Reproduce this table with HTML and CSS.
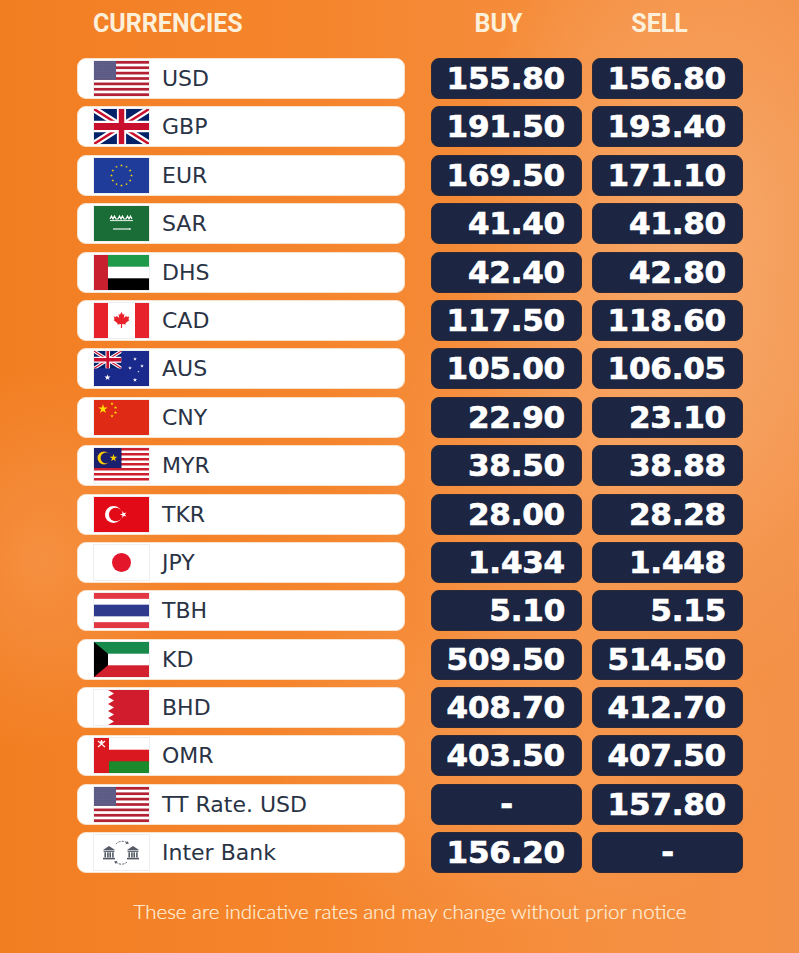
FILE: index.html
```html
<!DOCTYPE html>
<html lang="en">
<head>
<meta charset="utf-8">
<title>Currency Rates</title>
<link rel="stylesheet" href="styles.css">
</head>
<body>
<svg class="defs" width="0" height="0" aria-hidden="true">
  <defs>
    <polygon id="star" points="0,-1 0.2245,-0.309 0.951,-0.309 0.3633,0.118 0.588,0.809 0,0.382 -0.588,0.809 -0.3633,0.118 -0.951,-0.309 -0.2245,-0.309"/>
    <pattern id="usstars" width="8.25" height="7" patternUnits="userSpaceOnUse">
      <circle cx="4.1" cy="3.5" r="1.9" fill="#fff"/>
    </pattern>
    <g id="ukjack">
      <rect width="60" height="30" fill="#012169"/>
      <path d="M0,0 L60,30 M60,0 L0,30" stroke="#fff" stroke-width="6"/>
      <path d="M0,0 L60,30 M60,0 L0,30" stroke="#C8102E" stroke-width="2.2"/>
      <path d="M30,0 V30 M0,15 H60" stroke="#fff" stroke-width="10"/>
      <path d="M30,0 V30 M0,15 H60" stroke="#C8102E" stroke-width="6"/>
    </g>
    <g id="usflag">
      <rect width="247" height="130" fill="#fff"/>
      <g fill="#b22234">
        <rect y="0" width="247" height="10"/><rect y="20" width="247" height="10"/><rect y="40" width="247" height="10"/><rect y="60" width="247" height="10"/><rect y="80" width="247" height="10"/><rect y="100" width="247" height="10"/><rect y="120" width="247" height="10"/>
      </g>
      <rect width="99" height="70" fill="#3c3b6e"/>
      <rect width="99" height="70" fill="url(#usstars)"/>
    </g>
    <g id="bank" fill="#555b66">
      <polygon points="0,4 6,0 12,4"/>
      <rect x="0.5" y="4.6" width="11" height="1.3"/>
      <rect x="1.4" y="6.3" width="1.6" height="5.2"/>
      <rect x="4.1" y="6.3" width="1.6" height="5.2"/>
      <rect x="6.4" y="6.3" width="1.6" height="5.2"/>
      <rect x="9.1" y="6.3" width="1.6" height="5.2"/>
      <rect x="0" y="11.8" width="12" height="1.6"/>
    </g>
  </defs>
</svg>

<div class="page">
  <div class="head">
    <div class="h-name">CURRENCIES</div>
    <div class="h-col">BUY</div>
    <div class="h-col">SELL</div>
  </div>

  <div class="rows">
    <div class="row">
      <div class="name"><span class="flag"><svg viewBox="0 0 247 130" preserveAspectRatio="none"><use href="#usflag"/></svg></span><span class="code">USD</span></div>
      <div class="rate">155.80</div><div class="rate">156.80</div>
    </div>
    <div class="row">
      <div class="name"><span class="flag"><svg viewBox="0 0 60 30" preserveAspectRatio="none"><use href="#ukjack"/></svg></span><span class="code">GBP</span></div>
      <div class="rate">191.50</div><div class="rate">193.40</div>
    </div>
    <div class="row">
      <div class="name"><span class="flag"><svg viewBox="0 0 55 35" preserveAspectRatio="none">
        <rect width="55" height="35" fill="#1f3c9a"/>
        <g fill="#ffdd00">
          <use href="#star" transform="translate(37.5,17.5) scale(1.4)"/><use href="#star" transform="translate(36.16,22.5) scale(1.4)"/><use href="#star" transform="translate(32.5,26.16) scale(1.4)"/><use href="#star" transform="translate(27.5,27.5) scale(1.4)"/><use href="#star" transform="translate(22.5,26.16) scale(1.4)"/><use href="#star" transform="translate(18.84,22.5) scale(1.4)"/><use href="#star" transform="translate(17.5,17.5) scale(1.4)"/><use href="#star" transform="translate(18.84,12.5) scale(1.4)"/><use href="#star" transform="translate(22.5,8.84) scale(1.4)"/><use href="#star" transform="translate(27.5,7.5) scale(1.4)"/><use href="#star" transform="translate(32.5,8.84) scale(1.4)"/><use href="#star" transform="translate(36.16,12.5) scale(1.4)"/>
        </g></svg></span><span class="code">EUR</span></div>
      <div class="rate">169.50</div><div class="rate">171.10</div>
    </div>
    <div class="row">
      <div class="name"><span class="flag"><svg viewBox="0 0 55 35" preserveAspectRatio="none">
        <rect width="55" height="35" fill="#1a6d37"/>
        <path d="M16,13 l1.5,-3 l1.5,3 l1.5,-3 l1.5,3 h2 l1.5,-3 l1.5,3 l1.5,-3 l1.5,3 h2 l1.5,-3 l1.5,3 l1.5,-3 l1.5,3" stroke="#fff" stroke-width="1.2" fill="none"/>
        <path d="M16,14.6 H39" stroke="#fff" stroke-width="0.9"/>
        <path d="M19,23 H36" stroke="#fff" stroke-width="1.1"/>
        <path d="M36,22 v2" stroke="#fff" stroke-width="1"/>
      </svg></span><span class="code">SAR</span></div>
      <div class="rate">41.40</div><div class="rate">41.80</div>
    </div>
    <div class="row">
      <div class="name"><span class="flag"><svg viewBox="0 0 55 35" preserveAspectRatio="none">
        <rect width="55" height="35" fill="#fff"/>
        <rect x="14" width="41" height="11.7" fill="#1e9a4a"/>
        <rect x="14" y="23.3" width="41" height="11.7" fill="#000"/>
        <rect width="14" height="35" fill="#c8202f"/>
      </svg></span><span class="code">DHS</span></div>
      <div class="rate">42.40</div><div class="rate">42.80</div>
    </div>
    <div class="row">
      <div class="name"><span class="flag"><svg viewBox="0 0 55 35" preserveAspectRatio="none">
        <rect width="55" height="35" fill="#fff"/>
        <rect width="14" height="35" fill="#e8222a"/>
        <rect x="41" width="14" height="35" fill="#e8222a"/>
        <path transform="translate(27.5,17) scale(1.15)" fill="#e8222a" d="M0,-7 L1.3,-4.6 L2.6,-5.2 L2,-1.8 L4.2,-3.8 L4.6,-2.6 L6.8,-3 L6,-0.6 L7,0 L3.4,2.8 L3.8,4 L0.5,3.5 L0.5,7 L-0.5,7 L-0.5,3.5 L-3.8,4 L-3.4,2.8 L-7,0 L-6,-0.6 L-6.8,-3 L-4.6,-2.6 L-4.2,-3.8 L-2,-1.8 L-2.6,-5.2 L-1.3,-4.6 Z"/>
      </svg></span><span class="code">CAD</span></div>
      <div class="rate">117.50</div><div class="rate">118.60</div>
    </div>
    <div class="row">
      <div class="name"><span class="flag"><svg viewBox="0 0 55 35" preserveAspectRatio="none">
        <rect width="55" height="35" fill="#1a2a8c"/>
        <svg x="0" y="0" width="27.5" height="17.5" viewBox="0 0 60 30" preserveAspectRatio="none"><use href="#ukjack"/></svg>
        <g fill="#fff">
          <use href="#star" transform="translate(13.5,26.5) scale(3.2)"/>
          <use href="#star" transform="translate(41,8) scale(2)"/>
          <use href="#star" transform="translate(48,15) scale(2)"/>
          <use href="#star" transform="translate(36,17) scale(2)"/>
          <use href="#star" transform="translate(41,29) scale(2.2)"/>
          <use href="#star" transform="translate(44.5,20.5) scale(1.1)"/>
        </g>
      </svg></span><span class="code">AUS</span></div>
      <div class="rate">105.00</div><div class="rate">106.05</div>
    </div>
    <div class="row">
      <div class="name"><span class="flag"><svg viewBox="0 0 55 35" preserveAspectRatio="none">
        <rect width="55" height="35" fill="#df2a15"/>
        <g fill="#ffde00">
          <use href="#star" transform="translate(9,9) scale(5)"/>
          <use href="#star" transform="translate(18,3.8) scale(1.8)"/>
          <use href="#star" transform="translate(21.5,7.5) scale(1.8)"/>
          <use href="#star" transform="translate(21.5,12.5) scale(1.8)"/>
          <use href="#star" transform="translate(18,16) scale(1.8)"/>
        </g>
      </svg></span><span class="code">CNY</span></div>
      <div class="rate">22.90</div><div class="rate">23.10</div>
    </div>
    <div class="row">
      <div class="name"><span class="flag"><svg viewBox="0 0 55 35" preserveAspectRatio="none">
        <rect width="55" height="35" fill="#fff"/>
        <g fill="#cc1f2f">
          <rect y="0" width="55" height="2.5"/><rect y="5" width="55" height="2.5"/><rect y="10" width="55" height="2.5"/><rect y="15" width="55" height="2.5"/><rect y="20" width="55" height="2.5"/><rect y="25" width="55" height="2.5"/><rect y="30" width="55" height="2.5"/>
        </g>
        <rect width="27.5" height="20" fill="#1a1f6e"/>
        <circle cx="10" cy="10" r="6.5" fill="#ffcc00"/>
        <circle cx="12" cy="10" r="5.4" fill="#1a1f6e"/>
        <use href="#star" fill="#ffcc00" transform="translate(19.5,10) scale(4)"/>
      </svg></span><span class="code">MYR</span></div>
      <div class="rate">38.50</div><div class="rate">38.88</div>
    </div>
    <div class="row">
      <div class="name"><span class="flag"><svg viewBox="0 0 55 35" preserveAspectRatio="none">
        <rect width="55" height="35" fill="#e30a17"/>
        <circle cx="19.5" cy="17.5" r="8.5" fill="#fff"/>
        <circle cx="21.7" cy="17.5" r="6.8" fill="#e30a17"/>
        <use href="#star" fill="#fff" transform="translate(29.5,17.5) rotate(-18) scale(3.6)"/>
      </svg></span><span class="code">TKR</span></div>
      <div class="rate">28.00</div><div class="rate">28.28</div>
    </div>
    <div class="row">
      <div class="name"><span class="flag"><svg viewBox="0 0 55 35" preserveAspectRatio="none">
        <rect width="55" height="35" fill="#fff"/>
        <circle cx="27.5" cy="17.5" r="9.5" fill="#e3162b"/>
      </svg></span><span class="code">JPY</span></div>
      <div class="rate">1.434</div><div class="rate">1.448</div>
    </div>
    <div class="row">
      <div class="name"><span class="flag"><svg viewBox="0 0 55 36" preserveAspectRatio="none">
        <rect width="55" height="36" fill="#fff"/>
        <rect width="55" height="6" fill="#e23844"/>
        <rect y="12" width="55" height="12" fill="#2e3a8c"/>
        <rect y="30" width="55" height="6" fill="#e23844"/>
      </svg></span><span class="code">TBH</span></div>
      <div class="rate">5.10</div><div class="rate">5.15</div>
    </div>
    <div class="row">
      <div class="name"><span class="flag"><svg viewBox="0 0 55 35" preserveAspectRatio="none">
        <rect width="55" height="35" fill="#fff"/>
        <rect width="55" height="11.7" fill="#17894a"/>
        <rect y="23.3" width="55" height="11.7" fill="#d2202f"/>
        <polygon points="0,0 14,11.7 14,23.3 0,35" fill="#000"/>
      </svg></span><span class="code">KD</span></div>
      <div class="rate">509.50</div><div class="rate">514.50</div>
    </div>
    <div class="row">
      <div class="name"><span class="flag"><svg viewBox="0 0 55 35" preserveAspectRatio="none">
        <rect width="55" height="35" fill="#fff"/>
        <path d="M55,0 H14 L20,3.5 L14,7 L20,10.5 L14,14 L20,17.5 L14,21 L20,24.5 L14,28 L20,31.5 L14,35 H55 Z" fill="#d01c2c"/>
      </svg></span><span class="code">BHD</span></div>
      <div class="rate">408.70</div><div class="rate">412.70</div>
    </div>
    <div class="row">
      <div class="name"><span class="flag"><svg viewBox="0 0 55 35" preserveAspectRatio="none">
        <rect width="55" height="35" fill="#d9191f"/>
        <rect x="15" width="40" height="11.7" fill="#fff"/>
        <rect x="15" y="23.3" width="40" height="11.7" fill="#1a8a2c"/>
        <path d="M4,3 L11,9 M11,3 L4,9 M7.5,2 V7" stroke="#fff" stroke-width="1.1"/>
        <circle cx="7.5" cy="4" r="1.3" fill="#fff"/>
      </svg></span><span class="code">OMR</span></div>
      <div class="rate">403.50</div><div class="rate">407.50</div>
    </div>
    <div class="row">
      <div class="name"><span class="flag"><svg viewBox="0 0 247 130" preserveAspectRatio="none"><use href="#usflag"/></svg></span><span class="code">TT Rate. USD</span></div>
      <div class="rate dash">-</div><div class="rate">157.80</div>
    </div>
    <div class="row">
      <div class="name"><span class="flag"><svg viewBox="0 0 55 35">
        <use href="#bank" transform="translate(9,11)"/>
        <use href="#bank" transform="translate(33,11)"/>
        <path d="M22,9 A8,8 0 0 1 33,8" stroke="#555b66" stroke-width="1" fill="none" stroke-dasharray="2 1.2"/>
        <path d="M33,27 A8,8 0 0 1 22,27" stroke="#555b66" stroke-width="1" fill="none" stroke-dasharray="2 1.2"/>
        <polygon points="33,6 35,8.6 31.6,9.2" fill="#555b66"/>
        <polygon points="22,29 20,26.4 23.4,25.8" fill="#555b66"/>
      </svg></span><span class="code">Inter Bank</span></div>
      <div class="rate">156.20</div><div class="rate dash">-</div>
    </div>
  </div>

  <p class="note">These are indicative rates and may change without prior notice</p>
</div>
</body>
</html>
```

FILE: styles.css
```css
* {
  box-sizing: border-box;
}

html,
body {
  margin: 0;
  padding: 0;
}

body {
  width: 799px;
  height: 953px;
  overflow: hidden;
  font-family: "DejaVu Sans", sans-serif;
  background:
    radial-gradient(ellipse 230px 330px at 690px 230px, rgba(250, 190, 140, 0.55), rgba(250, 190, 140, 0) 100%),
    radial-gradient(ellipse 260px 240px at 620px 470px, rgba(250, 185, 135, 0.35), rgba(250, 185, 135, 0) 100%),
    radial-gradient(ellipse 150px 190px at 40px 560px, rgba(250, 175, 120, 0.35), rgba(250, 175, 120, 0) 100%),
    radial-gradient(ellipse 260px 200px at 520px 740px, rgba(250, 185, 135, 0.25), rgba(250, 185, 135, 0) 100%),
    linear-gradient(90deg, #f27e22 0%, #f5852d 40%, #f58f40 75%, #f39148 100%);
}

.defs {
  position: absolute;
  width: 0;
  height: 0;
  overflow: hidden;
}

.page {
  padding: 9px 0 0 77px;
}

.head {
  display: flex;
  gap: 10px;
  height: 30px;
  margin-bottom: 19px;
  font-family: Roboto, "Liberation Sans", sans-serif;
  font-weight: 700;
  font-size: 25px;
  line-height: 30px;
  color: #fdf0da;
}

.h-name {
  width: 328px;
  margin-right: 16px;
  padding-left: 16px;
}

.h-col {
  width: 151px;
  text-align: center;
  padding-right: 16px;
}

.rows {
  display: flex;
  flex-direction: column;
  gap: 7.4px;
}

.row {
  display: flex;
  gap: 10px;
  height: 41px;
}

.name {
  width: 328px;
  margin-right: 16px;
  display: flex;
  align-items: center;
  padding-left: 16px;
  background: #fff;
  border: 1.5px solid #f8e2cc;
  border-radius: 9px;
}

.flag {
  flex: none;
  display: block;
  width: 55px;
  height: 35px;
  margin-right: 13px;
  background: #fff;
  box-shadow: 0 0 0 1px #efefef;
}

.flag > svg {
  display: block;
  width: 55px;
  height: 35px;
}

.code {
  font-size: 22px;
  color: #2a3345;
  white-space: nowrap;
}

.rate {
  width: 151px;
  padding-right: 16px;
  background: #1c2642;
  border: 1px solid #2b2a36;
  border-radius: 8px;
  color: #fff;
  font-family: "DejaVu Sans", sans-serif;
  font-weight: 700;
  font-size: 31px;
  line-height: 39px;
  letter-spacing: -0.2px;
  text-align: right;
  -webkit-text-stroke: 0.7px #fff;
}

.rate.dash {
  padding-right: 0;
  text-align: center;
}

.note {
  width: 666px;
  margin: 26px 0 0;
  font-family: Lato, "Open Sans", sans-serif;
  font-weight: 300;
  font-size: 20.5px;
  line-height: 24px;
  color: #fff1de;
  text-align: center;
  -webkit-text-stroke: 0.2px #fff1de;
}
```
